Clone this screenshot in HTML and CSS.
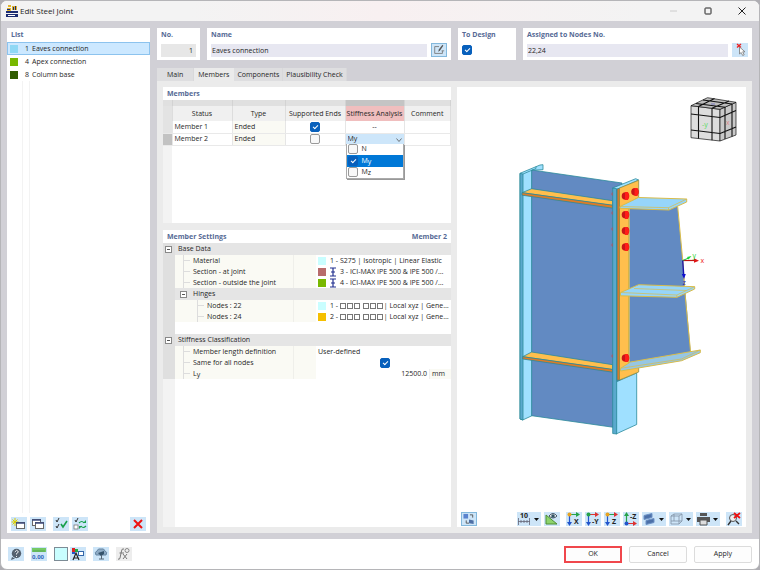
FILE: index.html
```html
<!DOCTYPE html>
<html lang="en">
<head>
<meta charset="utf-8">
<title>Edit Steel Joint</title>
<link rel="stylesheet" href="styles.css">
</head>
<body>
<div class="window">
  <header class="titlebar">
    <svg class="app-icon" viewBox="0 0 12 12"><path fill="#e3b52c" d="M2 0h3v2H2zM6 1h5v4H6zM1 3h4v3H1z"/><path fill="#1c2d72" d="M0 6h12v2H0zM0 9h12v3H0zM1 4h3v1H1zM7 2h1v3H7zM9 1h1v4H9z"/><path fill="#fff" d="M2 10h7v1H2z"/></svg>
    <h1>Edit Steel Joint</h1>
    <button class="win-btn" aria-label="Minimize" disabled><svg viewBox="0 0 10 10"><path d="M1 5h7" stroke="#ccc"/></svg></button>
    <button class="win-btn" aria-label="Maximize"><svg viewBox="0 0 10 10"><rect x="2" y="2" width="6" height="6" rx=".6" fill="none" stroke="#222"/></svg></button>
    <button class="win-btn" aria-label="Close"><svg viewBox="0 0 10 10"><path d="M1.500 1.500l7 7m0-7l-7 7" stroke="#222"/></svg></button>
  </header>

  <main class="content">
    <aside class="card sidebar">
      <h2>List</h2>
      <ul class="joints">
        <li class="selected"><i class="swatch sky"></i><span class="num">1</span><span>Eaves connection</span></li>
        <li><i class="swatch lime"></i><span class="num">4</span><span>Apex connection</span></li>
        <li><i class="swatch forest"></i><span class="num">8</span><span>Column base</span></li>
      </ul>
      <div class="list-space"></div>
      <div class="tools list-tools">
        <button class="tool" aria-label="New"><svg viewBox="0 0 16 14"><path d="M4 1v8M0.500 5h7M1.500 2.500l5 5m0-5l-5 5" stroke="#d9cd00"/><rect x="5.500" y="5.500" width="8" height="6" fill="#fff" stroke="#666"/><path d="M5 6h9" stroke="#3b4a7c" stroke-width="1.600"/></svg></button>
        <button class="tool" aria-label="Copy"><svg viewBox="0 0 16 14"><rect x="2.500" y="2.500" width="8" height="6" fill="#fff" stroke="#666"/><path d="M2 3h9" stroke="#3b4a7c" stroke-width="1.600"/><rect x="5.500" y="5.500" width="8" height="6" fill="#fff" stroke="#666"/><path d="M5 6h9" stroke="#3b4a7c" stroke-width="1.600"/></svg></button>
        <button class="tool gap-before" aria-label="Select all"><svg viewBox="0 0 16 14" fill="none"><path d="M3 3l1 2L6 1M3 9l1 2L6 7" stroke="#333"/><path d="M8 7l2 3 4-6" stroke="#17a04a" stroke-width="1.600"/></svg></button>
        <button class="tool" aria-label="Invert selection"><svg viewBox="0 0 16 14" fill="none"><path d="M3 3l1 2L6 1" stroke="#333"/><rect x="2" y="8" width="4" height="4" fill="#fff" stroke="#777" stroke-width=".8"/><path d="M7 6q3-3 5 0m2 3q-3 3-5 0" stroke="#17a04a" stroke-width="1.200"/><path d="M11 6h3V3zM10 9H7v3z" fill="#17a04a"/></svg></button>
        <button class="tool push" aria-label="Delete"><svg viewBox="0 0 16 14"><path d="M4 3l8 8m0-8l-8 8" stroke="#e11" stroke-width="2"/></svg></button>
      </div>
    </aside>

    <section class="editor">
      <div class="fields">
        <div class="card field"><label for="no">No.</label><input class="readonly" id="no" value="1" readonly></div>
        <div class="card field"><label for="name">Name</label>
          <div class="line"><input id="name" value="Eaves connection"><button class="tool outlined" aria-label="Edit name"><svg viewBox="0 0 16 14" fill="none"><path d="M8 3H3v8h9V8" stroke="#777"/><path d="M7 9l1-3 4-5 1 1-4 6z" fill="#555"/><path d="M11 8h3" stroke="#777"/></svg></button></div></div>
        <div class="card field"><label for="design">To Design</label><input class="check" type="checkbox" id="design" checked></div>
        <div class="card field"><label for="nodes">Assigned to Nodes No.</label>
          <div class="line"><input id="nodes" value="22,24"><button class="tool" aria-label="Pick nodes"><svg viewBox="0 0 16 14"><path d="M5 1l4 3.500M9 1L5 4.500" stroke="#e22" stroke-width="1.400"/><path d="M7.500 4v7l1.700-1.500 1.500 3 1.500-.700-1.500-3h2.300z" fill="#fff" stroke="#777" stroke-width=".8"/></svg></button></div></div>
      </div>

      <nav class="tabs">
        <button>Main</button><button class="active">Members</button><button>Components</button><button>Plausibility Check</button>
      </nav>

      <div class="pane">
        <section class="card members">
          <h2>Members</h2>
          <table class="grid">
            <colgroup><col class="c-mark"><col class="c-status"><col class="c-type"><col class="c-ends"><col class="c-stiff"><col></colgroup>
            <thead>
              <tr class="strip"><td></td><td></td><td></td><td></td><td class="dark"></td><td></td></tr>
              <tr><th class="mark"></th><th>Status</th><th>Type</th><th>Supported Ends</th><th class="hot">Stiffness Analysis</th><th>Comment</th></tr>
            </thead>
            <tbody>
              <tr><td class="mark"></td><td>Member 1</td><td class="tint">Ended</td><td class="mid"><input class="check" type="checkbox" aria-label="Member 1 supported ends" checked></td><td class="mid">--</td><td></td></tr>
              <tr><td class="mark current"></td><td>Member 2</td><td class="tint">Ended</td><td class="mid"><input class="check" type="checkbox" aria-label="Member 2 supported ends"></td>
                <td class="drop"><select aria-label="Stiffness analysis"><option>My</option></select><svg class="chevron" viewBox="0 0 6 6"><path d="M.5 1.500L3 4.500l2.500-3" fill="none" stroke="#555" stroke-width=".8"/></svg>
                  <div class="menu">
                    <label><input class="check" type="checkbox">N</label>
                    <label class="on"><input class="check" type="checkbox" checked><span>M<sub>y</sub></span></label>
                    <label><input class="check" type="checkbox"><span>M<sub>z</sub></span></label>
                  </div></td><td></td></tr>
            </tbody>
          </table>
          <div class="rail"></div>
        </section>

        <section class="card settings">
          <div class="heading"><h2>Member Settings</h2><h2>Member 2</h2></div>
          <table class="props">
            <colgroup><col class="c-rail"><col class="c-label"><col class="c-unit"><col></colgroup>
            <tbody>
              <tr class="group"><th class="rail-cell"><button class="fold" aria-label="Collapse Base Data"></button></th><th colspan="3">Base Data</th></tr>
              <tr><td class="rail-cell"></td><th class="leaf">Material</th><td class="tint"></td><td><div class="value"><i class="swatch cyan"></i><span class="text">1 - S275 | Isotropic | Linear Elastic</span></div></td></tr>
              <tr><td class="rail-cell"></td><th class="leaf">Section - at joint</th><td class="tint"></td><td><div class="value"><i class="swatch rose"></i><svg class="beam" viewBox="0 0 6 10"><path d="M0 1h6M0 9h6M3 1v8M1 5h4" stroke="#22318f" stroke-width="1.200"/></svg><span class="text">3 - ICI-MAX IPE 500 &amp; IPE 500 /…</span></div></td></tr>
              <tr><td class="rail-cell"></td><th class="leaf">Section - outside the joint</th><td class="tint"></td><td><div class="value"><i class="swatch lime"></i><svg class="beam" viewBox="0 0 6 10"><path d="M0 1h6M0 9h6M3 1v8M1 5h4" stroke="#22318f" stroke-width="1.200"/></svg><span class="text">4 - ICI-MAX IPE 500 &amp; IPE 500 /…</span></div></td></tr>
              <tr class="group nested"><th class="rail-cell"></th><th colspan="3"><button class="fold" aria-label="Collapse Hinges"></button>Hinges</th></tr>
              <tr><td class="rail-cell"></td><th class="leaf deep">Nodes : 22</th><td class="tint"></td><td><div class="value"><i class="swatch cyan"></i><span class="text">1 - <span class="boxes"><i></i><i></i><i></i></span> <span class="boxes"><i></i><i></i><i></i></span>| Local xyz | Gene…</span></div></td></tr>
              <tr><td class="rail-cell"></td><th class="leaf deep">Nodes : 24</th><td class="tint"></td><td><div class="value"><i class="swatch amber"></i><span class="text">2 - <span class="boxes"><i></i><i></i><i></i></span> <span class="boxes"><i></i><i></i><i></i></span>| Local xyz | Gene…</span></div></td></tr>
              <tr class="spacer"><td class="rail-cell"></td><td colspan="3"></td></tr>
              <tr class="group"><th class="rail-cell"><button class="fold" aria-label="Collapse Stiffness Classification"></button></th><th colspan="3">Stiffness Classification</th></tr>
              <tr><td class="rail-cell"></td><th class="leaf">Member length definition</th><td class="tint"></td><td>User-defined</td></tr>
              <tr><td class="rail-cell"></td><th class="leaf">Same for all nodes</th><td class="tint"></td><td class="mid"><input class="check" type="checkbox" aria-label="Same for all nodes" checked></td></tr>
              <tr><td class="rail-cell"></td><th class="leaf">L<sub>y</sub></th><td class="tint"></td><td><div class="amount"><span>12500.0</span><span class="unit tint">mm</span></div></td></tr>
            </tbody>
          </table>
          <div class="rail"></div>
        </section>

        <section class="card view">
          <svg class="scene" viewBox="457 87 289 420" preserveAspectRatio="xMidYMin meet" role="img" aria-label="Joint model">
            <g stroke="#2b8a9a" stroke-width=".8" stroke-linejoin="round">
              <path fill="#9fe0ff" d="M520 173.300L540 165l3-.300v5l-11 .5v245.500l-9.300 4.300-2.700-1z"/>
              <path fill="#628ac2" d="M531.700 170L622 183v245.500l-90.300-12.800z"/>
              <path fill="#5aa9cd" d="M520 173.300l3 .7v246l-3-1z"/>
              <path fill="none" d="M523 174l13-5.500v-2"/>
              <path fill="#ffbf4d" d="M522 192.700l9.700-4 81 12v4.800z"/>
              <path fill="#e07a24" d="M522 192.700l90.700 12.500v3l-90.700-13z"/>
              <path fill="#ffbf4d" d="M522.700 356.700l9-4.700 81 12.700v5z"/>
              <path fill="#e07a24" d="M522.700 356.700l90 12.700v2.800l-90-13.200z"/>
              <path fill="#9fe0ff" d="M612.700 188l23-9.300 3 1.300L616 190zM616 382l20.700-9v51.500L616 434z"/>
              <path fill="#5aa9cd" d="M612.700 188l4 .700V434l-4-.500z"/>
              <path fill="#d97828" d="M617 189l3-1v192l-3 .300z"/>
            </g>
            <g fill="#c44a55"><path d="M612.500 192v4q-2-2 0-4m0 19v4q-2-2 0-4m0 16v4q-2-2 0-4m0 16v4q-2-2 0-4m0 111v4q-2-2 0-4"/></g>
            <path fill="#ffbf4d" stroke="#8c8d45" stroke-width=".8" d="M619.500 188l19.200-7.700v17L629 203v163l9.700-1v7L619.500 380z"/>
            <path fill="#628ac2" d="M629.500 208l48-2 5.200 54 8 92-61.200 12z"/>
            <g stroke="#d9bc49" stroke-width="1" stroke-linejoin="round">
              <path fill="none" d="M629 207v158M677.700 206.500l5 53.500 2.600 37 5.400 56"/>
              <path fill="#96d5fa" d="M620 206.500l18.500-9 48.200 1.500v3L669 210l-49-1.700z"/>
              <path fill="none" stroke-width=".7" d="M620 206.500l48.500 1.200 18.200-8.700M668.500 207.700v2.300"/>
              <path fill="#96d5fa" d="M620.500 292.500l18.200-7.800 56 2v2.300l-17.700 8.300-56.500-1.500z"/>
              <path fill="none" stroke-width=".7" d="M620.500 292.500l56.300 2.500 17.900-8.300M676.800 295v2.300M634 288.500l52 2"/>
              <path fill="#96c6e4" d="M620.500 368.300l10-6.300 69.800-12v2.700l-18.600 8-61.200 10.300z"/>
              <path fill="none" stroke-width=".7" d="M620.500 368.300l61-9.300 18.800-9"/>
            </g>
            <g fill="#c91418"><circle cx="625.500" cy="196" r="3.800"/><circle cx="635" cy="191.700" r="3.800"/><circle cx="625.500" cy="214.700" r="3.800"/><circle cx="625.500" cy="230.700" r="3.800"/><circle cx="625.500" cy="247" r="3.800"/><circle cx="625.500" cy="358" r="3.800"/></g>
            <g fill="#ff1d18"><path d="M625 192h3q2 4 0 8h-3zM634.500 188h3q2 4 0 8h-3zM625 211h3q2 4 0 8h-3zM625 227h3q2 4 0 8h-3zM625 243h3q2 4 0 8h-3zM625 354h3q2 4 0 8h-3z"/></g>
            <path d="M682.700 260.500H695" stroke="#c01515" stroke-width="1.200"/><path d="M694 258.300l5 2.500-5 2z" fill="#e01515"/>
            <path d="M682.700 260.500l6-2.500" stroke="#19c03a"/><path d="M687 257l4.500-1-3 3.500z" fill="#19d83a"/>
            <path d="M682.700 260.500l1 15" stroke="#1412b0" stroke-width="1.400"/><path d="M681.800 274h4l-1.800 5z" fill="#1010d0"/>
            <text x="700.500" y="263" fill="#e22">x</text><text x="692.500" y="258" fill="#1bd02f">y</text><text x="682.500" y="285" fill="#2222bb">z</text>
            <g stroke="#111" stroke-width="1.100" stroke-linejoin="round">
              <path stroke-width=".7" fill="#ddd" d="M691 105.700l29 3.600V141l-29-3.300z"/>
              <path stroke-width=".7" fill="#c9c9c9" d="M720 109.300l16-7V135l-16 6z"/>
              <path stroke-width=".7" fill="#bdbdbd" d="M691 105.700l16.500-8 28.500 4.600-16 7z"/>
              <path fill="none" d="M691 114l29 3.500 16-7M691 130l29 3.500 16-6.500M698.500 106.500v32M712 108.300v32M725 107v32M732 104v32.500M696 103.500l29 3.700M703 100l29 4M698.500 106.500l16-8M712 108.300l17-7.300"/>
            </g>
            <text x="702" y="127" fill="#55db61">-y</text><text x="726" y="125" fill="#d98a8a">x</text><path d="M711 104h4" stroke="#77b"/>
          </svg>
          <div class="tools view-tools">
            <button class="tool outlined" aria-label="Switch view"><svg viewBox="2 0 12 13"><rect x="2" y="1" width="5" height="5" fill="#5a83ce"/><path d="M9 2h3v3M5 8v3h3" fill="none" stroke="#555"/><path d="M8 7l5 1v4l-5-1z" fill="#4e6fa5"/></svg></button>
            <button class="tool wide ruler" aria-label="Scale"><svg viewBox="0 0 24 14"><text x="3" y="6">10</text><path d="M1.500 6v7M12.500 6v7M1 9.500h12M4 8v3m3-3v3m3-3v3" stroke="#667" stroke-width=".8"/><path d="M17 6h5l-2.500 3z" fill="#111"/></svg></button>
            <button class="tool" aria-label="Show dimensions"><svg viewBox="0 0 16 14"><path d="M2 3v9h11z" fill="#8ed46c" stroke="#4d8f36"/><path d="M5 4q4-5 8 0-4 4-8 0z" fill="#fff" stroke="#456"/><circle cx="9" cy="4" r="1.800" fill="#356"/></svg></button>
            <button class="tool gap-before" aria-label="View in X"><svg viewBox="0 0 16 14"><path d="M3.500 3v9" stroke="#2255cc" stroke-width="1.200"/><path d="M4 2.500h8" stroke="#26a34a" stroke-width="1.200"/><circle cx="3.500" cy="2.500" r="2" fill="#e9a321"/><path d="M10 0l4 2.500L10 5z" fill="#26a34a"/><path d="M1 10h5l-2.500 4z" fill="#25c"/><text x="8" y="12">X</text></svg></button>
            <button class="tool" aria-label="View in -Y"><svg viewBox="0 0 16 14"><path d="M3.500 3v9" stroke="#2255cc" stroke-width="1.200"/><path d="M4 2.500h8" stroke="#d33" stroke-width="1.200"/><circle cx="3.500" cy="2.500" r="2" fill="#26a34a"/><path d="M10 0l4 2.500L10 5z" fill="#d33"/><path d="M1 10h5l-2.500 4z" fill="#25c"/><text x="7" y="12">-Y</text></svg></button>
            <button class="tool" aria-label="View in Z"><svg viewBox="0 0 16 14"><path d="M3.500 3v9" stroke="#2255cc" stroke-width="1.200"/><path d="M4 2.500h8" stroke="#26a34a" stroke-width="1.200"/><circle cx="3.500" cy="2.500" r="2" fill="#e9a321"/><path d="M10 0l4 2.500L10 5z" fill="#d33"/><path d="M1 10h5l-2.500 4z" fill="#25c"/><text x="8" y="12">Z</text></svg></button>
            <button class="tool" aria-label="View in -Z"><svg viewBox="0 0 16 14"><path d="M3.500 11V3" stroke="#26a34a" stroke-width="1.200"/><path d="M4 11.500h8" stroke="#d33" stroke-width="1.200"/><circle cx="3.500" cy="11.500" r="2" fill="#25c"/><path d="M10 9l4 2.500-4 2.500z" fill="#d33"/><path d="M1 4h5L3.500 0z" fill="#26a34a"/><text x="7" y="7">-Z</text></svg></button>
            <button class="tool wide" aria-label="Display mode"><svg viewBox="0 0 24 14"><path d="M2 3.500l8-2v4l-8 2zM4 8.500l8-2v4l-8 2z" fill="#4c70a8" stroke="#6c91c5"/><path d="M17 6h5l-2.500 3z" fill="#111"/></svg></button>
            <button class="tool wide" aria-label="Wireframe"><svg viewBox="0 0 24 14"><path d="M2 4l3-2h8v7l-3 3H2zM2 4h8v8M10 4l3-2M5 2v7H2m3 0h8" fill="none" stroke="#8193a5" stroke-width=".8"/><path d="M17 6h5l-2.500 3z" fill="#111"/></svg></button>
            <button class="tool wide" aria-label="Print"><svg viewBox="0 0 24 14"><path d="M4 1h7v3H4zM1 5h13v5H1z" fill="#555"/><path d="M4 8h7v5H4z" fill="#ddd" stroke="#555"/><path d="M17 6h5l-2.500 3z" fill="#111"/></svg></button>
            <button class="tool gap-before" aria-label="Reset zoom"><svg viewBox="0 0 16 14"><circle cx="7" cy="6" r="3.500" fill="#eee" stroke="#555"/><path d="M5 9l-3 4M10 9l3 3" stroke="#333" stroke-width="1.400"/><path d="M8 1l6 5m0-5L8 6" stroke="#e11" stroke-width="1.800"/></svg></button>
          </div>
        </section>
      </div>
    </section>
  </main>

  <footer class="footer">
    <div class="tools foot-tools">
      <button class="tool" aria-label="Help"><svg viewBox="0 0 16 14"><path d="M4 10l-1 3 4-1.500z" fill="#53606e"/><circle cx="8.500" cy="6.500" r="4.700" fill="#53606e"/><path d="M6.800 5q1.700-3 3.500-.500 0 1.300-1.800 2v1M8.500 9v1" fill="none" stroke="#fff" stroke-width=".9"/></svg></button>
      <button class="tool units" aria-label="Units"><svg viewBox="0 0 16 14"><path d="M1 1h14v4H1z" fill="#75c966"/><path d="M3 3v2m2-2v2m2-2v2m2-2v2m2-2v2m2-2v2" stroke="#3f9048" stroke-width=".6"/><text x="1" y="12">0,00</text></svg></button>
      <button class="tool color" aria-label="Color"></button>
      <button class="tool" aria-label="Display properties"><svg viewBox="0 0 16 14"><path d="M2 1h3v4H2z" fill="#d22"/><path d="M5 2h3v3H5z" fill="#2a4"/><path d="M2 5h3v2H2z" fill="#25c"/><path d="M3 13l3-7 3 7M4 11h4" fill="none" stroke="#222" stroke-width="1.200"/><rect x="8.500" y="4.500" width="5" height="4" fill="#fff" stroke="#36a"/></svg></button>
      <button class="tool" aria-label="Cloud view"><svg viewBox="0 0 16 14"><path d="M3 8q-2-3 1-4 1-3 4-2 3-1 4 2 3 1 1 4z" fill="#8eabc5" stroke="#6686a3"/><path d="M5 6l6-2v3L8 9z" fill="#35536c"/><path d="M6 12h5M8.500 8v4" stroke="#567"/></svg></button>
      <button class="tool off" aria-label="Formula" disabled><svg viewBox="0 0 16 14"><path d="M8 2Q6 1 5.500 4L4 11q-.500 2-2 1M3.500 6H8M7 7l4 5m0-5l-4 5" fill="none" stroke="#777"/><circle cx="11" cy="3.500" r="2" fill="none" stroke="#888"/></svg></button>
    </div>
    <div class="actions"><button class="primary">OK</button><button>Cancel</button><button>Apply</button></div>
  </footer>
</div>
</body>
</html>
```
FILE: styles.css
```css
* { box-sizing: border-box; }
body {
  margin: 0;
  background: #aeadb2;
  color: #262626;
  font: 7px/10px "Open Sans", "Noto Sans", sans-serif;
}
button, input, select { font: inherit; color: inherit; margin: 0; padding: 0; border: 0; border-radius: 0; }
h1, h2 { margin: 0; font: inherit; }
svg { display: block; }
i { font-style: normal; }

.window {
  display: flex;
  flex-direction: column;
  min-height: 100vh;
  border: 1px solid #b5b5b8;
  border-radius: 7px;
  overflow: hidden;
  background: #fff;
}
.titlebar {
  display: flex;
  align-items: center;
  height: 20px;
  padding: 0 5px;
  background: linear-gradient(90deg, #f3f3f3 25%, #f8f0f1 50%, #f3f3f3 85%);
}
.app-icon { width: 12px; height: 12px; }
h1 { flex: 1; padding-left: 2px; font-size: 8px; }
.win-btn { width: 34px; height: 20px; display: grid; place-items: center; background: none; }
.win-btn:last-child { margin-right: -5px; }
.win-btn svg { width: 10px; height: 10px; }

.content {
  flex: 1;
  display: grid;
  grid-template-columns: 143px 1fr;
  gap: 7px;
  padding: 7px 7px 6px 6px;
  background: #d1d0d6;
}
.card { background: #fff; min-width: 0; }
h2, .field label { display: block; color: #566a95; font-weight: 700; line-height: 13px; }
.sidebar { display: flex; flex-direction: column; }
.sidebar h2 { padding-left: 4px; }
.joints { list-style: none; margin: 1px 0 0; padding: 0; }
.joints li {
  display: grid;
  grid-template-columns: 8px 9px 1fr;
  column-gap: 2px;
  align-items: center;
  height: 13px;
  padding-left: 2px;
  border: 1px solid transparent;
}
.joints .selected { background: #cce8ff; border-color: #8cc3ee; }
.joints span:last-child { padding-left: 1px; }
.num { text-align: right; }
.swatch { display: block; width: 8px; height: 8px; flex: none; }
.sky { background: #8fd8f5; }
.lime { background: #78b800; }
.forest { background: #305c00; }
.cyan { background: #c9feff; }
.rose { background: #b86c6c; }
.amber { background: #f5bf00; }
.list-space {
  flex: 1;
  margin-left: 15px;
  width: 8px;
  border-left: 1px solid #f3f3f3;
  border-right: 1px solid #f3f3f3;
}

.tools { display: flex; align-items: center; gap: 3px; }
.tool { flex: none; width: 16px; height: 14px; background: #cde5f8; }
.tool svg { width: 100%; height: 100%; }
.tool.wide { width: 24px; }
.tool.outlined { border: 1px solid #83b8dc; }
.tool.off { background: #ededed; }
.tool.color { width: 14px; background: #c9feff; border: 1px solid #7d8c96; }
.tool text { font-size: 7px; font-weight: 700; fill: #222; }
.units text { font-size: 6px; fill: #3467bb; }
.push { margin-left: auto; }
.list-tools { padding: 4px 4px 2px; }
.list-tools .gap-before { margin-left: 4px; }

.editor { display: flex; flex-direction: column; min-width: 0; }
.fields { display: grid; grid-template-columns: 43px 244px 58px 1fr; gap: 7px; }
.field { height: 32px; padding: 0 4px; }
.field input:not(.check) { width: 100%; min-width: 0; height: 13px; padding: 0 1px; background: #e7e7f1; }
.field .readonly:not(.check) { display: block; margin-top: 3px; padding-right: 3px; background: #e7e7e7; text-align: right; }
.line { display: flex; align-items: center; gap: 4px; padding-top: 2px; }
.line input { flex: 1; }
.field .check { margin-top: 4px; }
.check {
  appearance: none;
  display: block;
  width: 10px;
  height: 10px;
  border: 1px solid #999;
  border-radius: 2px;
  background: #f8f8f8;
}
.check:checked { background: #0860bc; border-color: #0860bc; }
.check:checked::after {
  content: "";
  display: block;
  width: 4px;
  height: 2px;
  margin: 2px;
  border: solid #fff;
  border-width: 0 0 1px 1px;
  transform: rotate(-45deg);
}

.tabs { display: flex; margin-top: 8px; }
.tabs button { height: 13px; padding: 0 3px; background: #dedee0; border-right: 1px solid #d8d8da; }
.tabs button:first-child { padding: 0 10px; }
.tabs .active { padding: 0 4px; background: #ebebeb; border-right-color: #ebebeb; }
.pane {
  flex: 1;
  display: grid;
  grid-template-columns: 288px 1fr;
  grid-template-rows: 136px 1fr;
  gap: 7px 6px;
  padding: 6px;
  background: #ebebeb;
}
.members, .settings { display: flex; flex-direction: column; }
.members h2 { padding-left: 4px; }
.view { grid-column: 2; grid-row: 1 / 3; display: flex; flex-direction: column; justify-content: space-between; }

table { width: 100%; table-layout: fixed; border-collapse: collapse; }
th, td { padding: 0; font-weight: 400; text-align: left; white-space: nowrap; line-height: 10px; }
sub { font-size: 7px; line-height: 0; vertical-align: -1px; }
.tint { background: #fafaf4; }
.mid { text-align: center; }
.mid .check { margin: 0 auto; }
.rail { flex: 1; background: #f3f3f3; }
.members .rail { width: 9px; }

.c-mark { width: 9px; }
.c-status { width: 60px; }
.c-type { width: 53px; }
.c-ends { width: 60px; }
.c-stiff { width: 59px; }
.grid .strip td { height: 6px; background: #e0e0e0; border-right: 1px solid #d3d3d3; }
.grid .strip .dark { background: #c4c4c4; }
.grid thead th { height: 15px; background: #f0f0f0; border-right: 1px solid #ddd; text-align: center; }
.grid thead .hot { background: #f0bebe; }
.grid tbody td { height: 12px; padding-left: 2px; border-right: 1px solid #e6e6e6; border-bottom: 1px solid #e9e9e9; }
.grid tbody .mid { padding: 0; }
.grid tbody .mark, .grid thead .mark { background: #e3e3e3; }
.grid tbody .current { background: #c2c2c2; }
.grid tbody .drop { position: relative; padding: 0; background: #cde6fa; }
.drop select { display: block; appearance: none; width: 100%; height: 10px; padding-left: 2px; background: none; }
.chevron { position: absolute; right: 2px; top: 3px; width: 6px; height: 6px; }
.menu {
  position: absolute;
  top: 10px;
  left: 0;
  width: 58px;
  background: #fff;
  border: 1px solid #aaa;
  border-top: 0;
  box-shadow: 1px 1px #999;
}
.menu label { display: flex; align-items: center; gap: 4px; height: 11px; padding-left: 1px; }
.menu .on { background: #0078d7; color: #fff; height: 12px; }

.heading { display: flex; justify-content: space-between; padding: 0 4px; }
.c-rail { width: 12px; }
.c-label { width: 118px; }
.c-unit { width: 23px; }
.props th, .props td { height: 11px; }
.props .group th { height: 12px; background: #e5e5e5; padding-left: 3px; }
.props .nested th { padding-left: 5px; }
.props .rail-cell, .props .group .rail-cell { background: #dfdfdf; padding-left: 2px; }
.props .spacer td { height: 12px; }
.props .leaf { padding-left: 18px; border-right: 1px solid #efefea; background: linear-gradient(#ddd, #ddd) 8px 5px / 7px 1px no-repeat, linear-gradient(#ddd, #ddd) 8px 0 / 1px 100% no-repeat #fafaf4; }
.props .deep { padding-left: 32px; background-position: 22px 5px, 22px 0; }
.props td:last-child { padding-left: 2px; }
.fold {
  display: block;
  width: 7px;
  height: 7px;
  border: 1px solid #888;
  background: linear-gradient(#555, #555) 1px 2px / 3px 1px no-repeat #fff;
}
.nested .fold { display: inline-block; margin-right: 6px; vertical-align: -1px; }
.value { display: flex; align-items: center; gap: 4px; }
.beam { flex: none; width: 6px; height: 10px; }
.boxes { display: inline-flex; gap: 1px; margin-right: 1px; vertical-align: -1px; }
.boxes i { width: 6px; height: 6px; border: 1px solid #777; }
.amount { display: flex; justify-content: flex-end; }
.unit { width: 22px; margin-left: 2px; padding-left: 2px; border-left: 1px solid #eee; }
.settings .rail { width: 12px; }

.scene { width: 100%; }
.scene text { font-size: 7px; }
.view-tools { padding: 0 4px 1px; }
.view-tools .ruler { margin-left: auto; }
.view-tools .gap-before { margin-left: 3px; }

.footer { display: flex; align-items: center; justify-content: space-between; height: 30px; padding: 0 7px; }
.foot-tools { gap: 7px; }
.foot-tools .color + .tool { margin-left: -5px; }
.actions { display: flex; gap: 7px; }
.actions button { width: 58px; height: 17px; background: #fdfdfd; border: 1px solid #dcdcdc; border-radius: 2px; }
.actions .primary { border: 2px solid #f0474c; border-radius: 0; }
```
